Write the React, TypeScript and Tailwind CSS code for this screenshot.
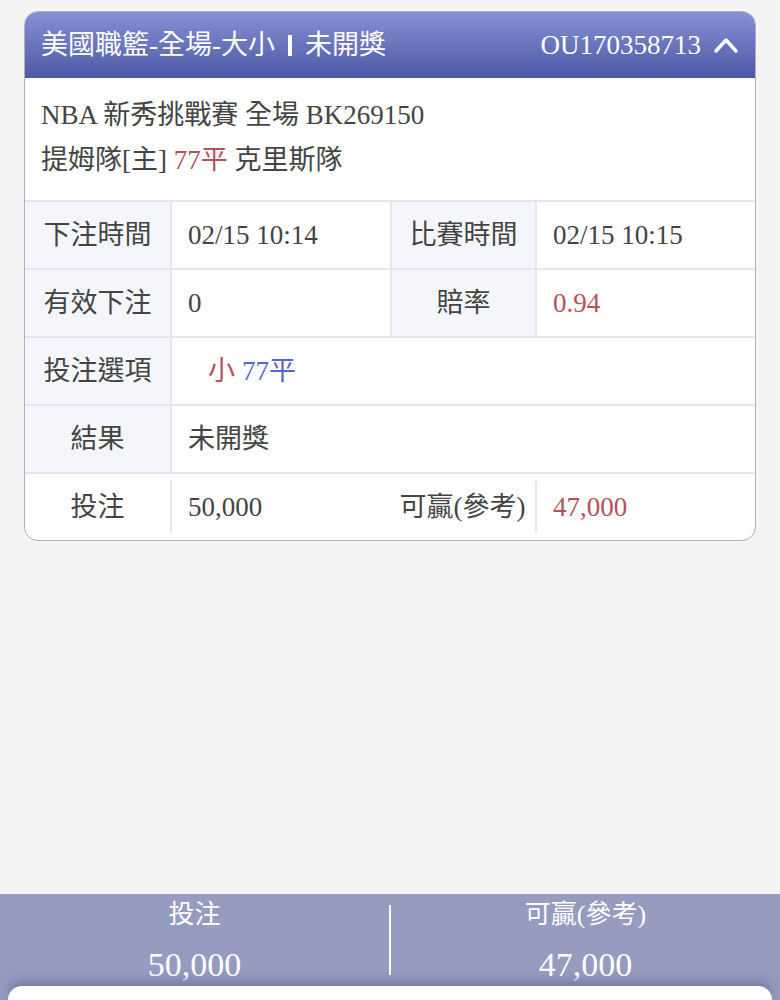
import React from "react";

const FONT = '"Liberation Serif", "Noto Sans CJK TC", serif';

function Label({ children, className = "" }: { children: React.ReactNode; className?: string }) {
  return (
    <div className={`flex items-center justify-center bg-[#f5f6fb] text-[#444] ${className}`}>{children}</div>
  );
}

function Value({ children, className = "" }: { children: React.ReactNode; className?: string }) {
  return <div className={`flex items-center pl-[16px] bg-white text-[#444] ${className}`}>{children}</div>;
}

export default function App() {
  return (
    <div className="h-[1000px] overflow-hidden flex flex-col bg-[#f4f4f5]" style={{ fontFamily: FONT }}>
      <div className="mx-[24px] mt-[11px] rounded-[14px] border border-[#a9b0c9] overflow-hidden bg-white text-[27px]">
        <div className="h-[66px] flex items-center justify-between pl-[16px] pr-[16px] bg-gradient-to-b from-[#8790d3] to-[#4e59a6] text-white">
          <div className="flex items-center">
            <span>美國職籃-全場-大小</span>
            <span className="inline-block w-[4px] h-[21px] bg-white mx-[13px]" />
            <span>未開獎</span>
          </div>
          <div className="flex items-center gap-[12px]">
            <span>OU170358713</span>
            <svg width="26" height="18" viewBox="0 0 26 18" fill="none">
              <polyline points="3,15 13,4 23,15" stroke="white" strokeWidth="3.5" strokeLinecap="round" strokeLinejoin="round" />
            </svg>
          </div>
        </div>
        <div className="pl-[16px] pt-[15px] pb-[17px] leading-[45px] text-[#444]">
          <div>NBA 新秀挑戰賽 全場 BK269150</div>
          <div>
            提姆隊[主] <span className="text-[#b5505e]">77平</span> 克里斯隊
          </div>
        </div>
        <div className="grid grid-cols-[145px_220px_145px_1fr] h-[68px] border-t-2 border-[#e4e6f0]">
          <Label>下注時間</Label>
          <Value className="border-l-2 border-[#e4e6f0]">02/15 10:14</Value>
          <Label className="border-l-2 border-[#e4e6f0]">比賽時間</Label>
          <Value className="border-l-2 border-[#e4e6f0]">02/15 10:15</Value>
        </div>
        <div className="grid grid-cols-[145px_220px_145px_1fr] h-[68px] border-t-2 border-[#e4e6f0]">
          <Label>有效下注</Label>
          <Value className="border-l-2 border-[#e4e6f0]">0</Value>
          <Label className="border-l-2 border-[#e4e6f0]">賠率</Label>
          <Value className="border-l-2 border-[#e4e6f0] text-[#b5505e]">0.94</Value>
        </div>
        <div className="grid grid-cols-[145px_1fr] h-[68px] border-t-2 border-[#e4e6f0]">
          <Label>投注選項</Label>
          <Value className="border-l-2 border-[#e4e6f0] pl-[36px]">
            <span className="text-[#b5505e]">小</span>
            <span className="text-[#5865c8] ml-[7px]">77平</span>
          </Value>
        </div>
        <div className="grid grid-cols-[145px_1fr] h-[68px] border-t-2 border-[#e4e6f0]">
          <Label>結果</Label>
          <Value className="border-l-2 border-[#e4e6f0]">未開獎</Value>
        </div>
        <div className="grid grid-cols-[145px_220px_145px_1fr] h-[68px] border-t-2 border-[#e4e6f0] items-center text-[#444]">
          <div className="flex justify-center">投注</div>
          <div className="h-[52px] flex items-center pl-[16px] border-l-2 border-[#e4e6f0]">50,000</div>
          <div className="flex justify-center">可贏(參考)</div>
          <div className="h-[52px] flex items-center pl-[16px] border-l-2 border-[#e4e6f0] text-[#b5505e]">47,000</div>
        </div>
      </div>
      <div className="flex-1" />
      <div className="h-[106px] bg-[#959cbf] flex flex-col">
        <div className="h-[92px] flex items-center text-white">
          <div className="flex-1 h-full flex flex-col items-center pt-[3px]">
            <div className="text-[26px] leading-[36px]">投注</div>
            <div className="text-[34px] leading-[46px] mt-[9px]">50,000</div>
          </div>
          <div className="w-[2px] h-[70px] bg-white" />
          <div className="flex-1 h-full flex flex-col items-center pt-[3px]">
            <div className="text-[26px] leading-[36px]">可贏(參考)</div>
            <div className="text-[34px] leading-[46px] mt-[9px]">47,000</div>
          </div>
        </div>
        <div className="flex-1 mx-[8px] rounded-t-[32px] bg-white shadow-[0_-4px_12px_rgba(60,70,130,0.45)]" />
      </div>
    </div>
  );
}
